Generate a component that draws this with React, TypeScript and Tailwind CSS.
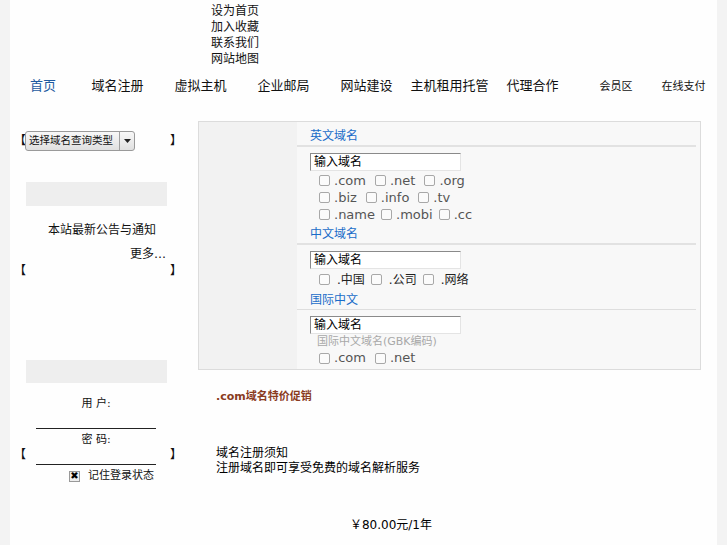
import React from "react";

const FONT = "font-['DejaVu_Sans','Noto_Sans_CJK_SC',sans-serif]";

const Cb = () => (
  <span className="inline-block w-[11px] h-[11px] border border-[#a8a8a8] rounded-[2px] bg-[#fbfbfb] shrink-0" />
);

const Opt = ({ label }: { label: string }) => (
  <span className="flex items-center gap-[4px]">
    <Cb />
    <span>{label}</span>
  </span>
);

const FakeInput = ({ value }: { value: string }) => (
  <div className="ml-[13px] w-[151px] h-[18px] bg-white border-t border-l border-[#8a8a8a] border-r-[#e4e4e4] border-b-[#e4e4e4] border-r border-b text-[12px] leading-[16px] pl-[3px] text-black">
    {value}
  </div>
);

const SectionTitle = ({ text, thin }: { text: string; thin?: boolean }) => (
  <div>
    <div className="h-[18px] leading-[18px] pl-[13px] text-[12px] text-[#1a6cc8]">{text}</div>
    <div className={thin ? "mr-[4px] h-px bg-[#dedede] mb-[1px]" : "mr-[4px] h-[2px] bg-[#e2e2e2]"} />
  </div>
);

export default function App() {
  const nav = [
    { t: "首页", w: "w-[66px]", c: "text-[#1e5aa0]" },
    { t: "域名注册", w: "w-[83px]", c: "" },
    { t: "虚拟主机", w: "w-[83px]", c: "" },
    { t: "企业邮局", w: "w-[83px]", c: "" },
    { t: "网站建设", w: "w-[83px]", c: "" },
    { t: "主机租用托管", w: "w-[83px]", c: "" },
    { t: "代理合作", w: "w-[83px]", c: "" },
  ];
  return (
    <div className={`min-h-[545px] bg-[#f3f3f3] ${FONT}`}>
      <div className="mx-auto w-[707px] min-h-[545px] bg-[#fefefe] text-[#111]">
        {/* top links */}
        <div className="pl-[201px] pt-[3px] text-[12px] leading-[16px] h-[67px]">
          <div>设为首页</div>
          <div>加入收藏</div>
          <div>联系我们</div>
          <div>网站地图</div>
        </div>
        {/* nav */}
        <div className="flex items-center h-[38px] text-[13px]">
          {nav.map((n) => (
            <div key={n.t} className={`${n.w} text-center whitespace-nowrap ${n.c}`}>
              {n.t}
            </div>
          ))}
          <div className="w-[84px] text-center text-[11px] pt-[2px]">会员区</div>
          <div className="w-[51px] text-center text-[11px] pt-[2px] whitespace-nowrap">在线支付</div>
        </div>
        {/* body */}
        <div className="flex">
          {/* left column */}
          <div className="w-[180px] text-[12px]">
            <div className="flex items-center mt-[26px] h-[20px]">
              <div className="w-[15px] pl-[4px]">【</div>
              <div className="w-[142px]">
                <div className="w-[110px] h-[20px] rounded-[3px] border border-[#9a9a9a] bg-gradient-to-b from-[#f8f8f8] to-[#e0e0e0] flex items-center">
                  <div className="flex-1 min-w-0 pl-[3px] text-[10.5px] whitespace-nowrap">选择域名查询类型</div>
                  <div className="w-[15px] h-full border-l border-[#a0a0a0] flex items-center justify-center shrink-0">
                    <svg width="7" height="4" viewBox="0 0 7 4"><path d="M0 0h7L3.5 4z" fill="#222" /></svg>
                  </div>
                </div>
              </div>
              <div className="w-[23px] pl-[3px]">】</div>
            </div>
            <div className="flex items-center mt-[31px]">
              <div className="w-[15px] pl-[4px]">【</div>
              <div className="w-[142px] h-[178px]">
                <div className="ml-[1px] h-[24px] bg-[#eeeeee]" />
                <div className="mt-[16px] pl-[23px] leading-[16px]">本站最新公告与通知</div>
                <div className="mt-[8px] text-right pr-[1px] leading-[16px]">更多…</div>
              </div>
              <div className="w-[23px] pl-[3px]">】</div>
            </div>
            <div className="flex items-center">
              <div className="w-[15px] pl-[4px]">【</div>
              <div className="w-[142px] h-[190px]">
                <div className="ml-[1px] h-[23px] bg-[#eeeeee]" />
                <div className="mt-[13px] text-center leading-[16px] text-[11px]">用 户:</div>
                <div className="mx-auto w-[120px] h-[17px] border-b border-[#222]" />
                <div className="mt-[3px] text-center leading-[16px] text-[11px]">密 码:</div>
                <div className="mx-auto w-[120px] h-[17px] border-b border-[#222]" />
                <div className="mt-[3px] flex items-center h-[16px] pl-[44px] gap-[8px]">
                  <span className="w-[11px] h-[11px] border border-[#999] bg-[#eee] flex items-center justify-center text-[10px] leading-none font-bold text-black">✖</span>
                  <span className="text-[11px]">记住登录状态</span>
                </div>
              </div>
              <div className="w-[23px] pl-[3px]">】</div>
            </div>
          </div>
          {/* main column */}
          <div className="ml-[8px] w-[503px]">
            <div className="mt-[16px] h-[249px] border border-[#dcdcdc] flex">
              <div className="w-[98px] bg-[#f2f2f2]" />
              <div className="flex-1 bg-[#f8f8f8] text-[13px] text-[#555] pt-[5px]">
                <SectionTitle text="英文域名" />
                <div className="mt-[6px]"><FakeInput value="输入域名" /></div>
                <div className="pl-[22px] leading-[17px] mt-[1px]">
                  <div className="flex gap-[9px] h-[17px] items-center"><Opt label=".com" /><Opt label=".net" /><Opt label=".org" /></div>
                  <div className="flex gap-[9px] h-[17px] items-center"><Opt label=".biz" /><Opt label=".info" /><Opt label=".tv" /></div>
                  <div className="flex gap-[6px] h-[17px] items-center"><Opt label=".name" /><Opt label=".mobi" /><Opt label=".cc" /></div>
                </div>
                <div className="mt-[2px]"><SectionTitle text="中文域名" /></div>
                <div className="mt-[6px]"><FakeInput value="输入域名" /></div>
                <div className="pl-[22px] mt-[2px] flex gap-[6px] h-[17px] items-center text-[12px] text-[#222]">
                  <span className="flex items-center gap-[7px]"><Cb /><span>.中国</span></span>
                  <span className="flex items-center gap-[7px]"><Cb /><span>.公司</span></span>
                  <span className="flex items-center gap-[7px]"><Cb /><span>.网络</span></span>
                </div>
                <div className="mt-[3px]"><SectionTitle text="国际中文" thin /></div>
                <div className="mt-[6px]"><FakeInput value="输入域名" /></div>
                <div className="pl-[20px] text-[11px] leading-[16px] text-[#a8a8a8]">国际中文域名(GBK编码)</div>
                <div className="pl-[22px] flex gap-[9px] h-[16px] items-center"><Opt label=".com" /><Opt label=".net" /></div>
              </div>
            </div>
            <div className="mt-[20px] pl-[18px] text-[11px] font-bold text-[#8a3b1e] leading-[14px]">.com域名特价促销</div>
            <div className="mt-[42px] pl-[18px] text-[12px] leading-[15px] text-black">
              <div>域名注册须知</div>
              <div>注册域名即可享受免费的域名解析服务</div>
            </div>
            <div className="mt-[41px] w-[386px] text-center text-[12px] leading-[16px] text-black">￥80.00元/1年</div>
          </div>
        </div>
      </div>
    </div>
  );
}
